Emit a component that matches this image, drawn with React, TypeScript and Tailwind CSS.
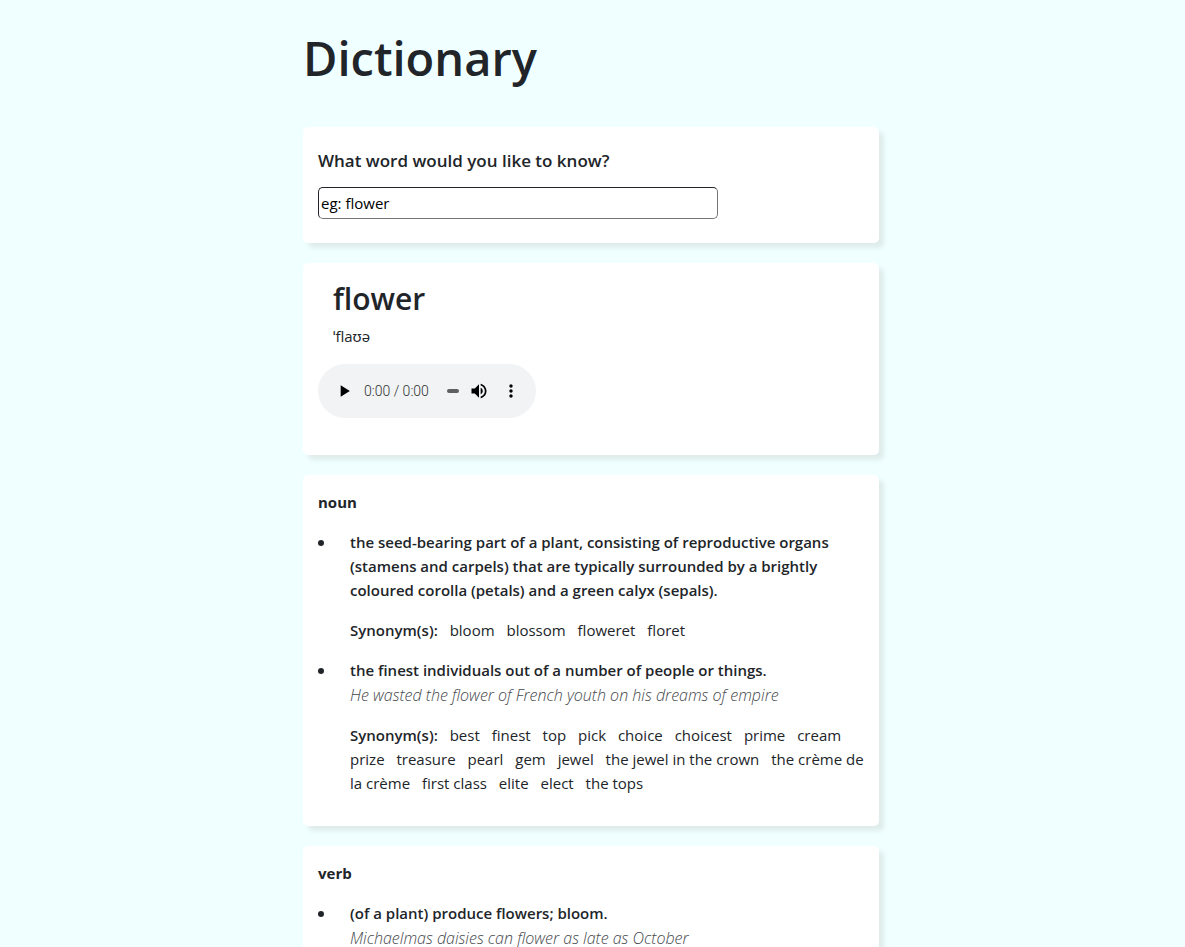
import { useState } from "react";
import type { ReactNode } from "react";

type Definition = {
  text: string;
  example?: string;
  synonyms: string[];
};

type Meaning = {
  partOfSpeech: string;
  definitions: Definition[];
};

const meanings: Meaning[] = [
  {
    partOfSpeech: "noun",
    definitions: [
      {
        text: "the seed-bearing part of a plant, consisting of reproductive organs (stamens and carpels) that are typically surrounded by a brightly coloured corolla (petals) and a green calyx (sepals).",
        synonyms: ["bloom", "blossom", "floweret", "floret"],
      },
      {
        text: "the finest individuals out of a number of people or things.",
        example: "He wasted the flower of French youth on his dreams of empire",
        synonyms: [
          "best",
          "finest",
          "top",
          "pick",
          "choice",
          "choicest",
          "prime",
          "cream",
          "prize",
          "treasure",
          "pearl",
          "gem",
          "jewel",
          "the jewel in the crown",
          "the crème de la crème",
          "first class",
          "elite",
          "elect",
          "the tops",
        ],
      },
    ],
  },
  {
    partOfSpeech: "verb",
    definitions: [
      {
        text: "(of a plant) produce flowers; bloom.",
        example: "Michaelmas daisies can flower as late as October",
        synonyms: [],
      },
    ],
  },
];

function Card({ children }: { children: ReactNode }) {
  return (
    <section className="mb-5 rounded-[5px] bg-white px-[15px] shadow-[5px_5px_5px_#dfecec]">
      {children}
    </section>
  );
}

function AudioPlayer() {
  return (
    <div className="flex h-[54px] w-[218px] items-center rounded-full bg-[#f1f3f4] pl-[14px] text-black">
      <button type="button" aria-label="Play" className="flex size-6 items-center justify-center">
        <svg viewBox="0 0 24 24" className="size-5" fill="currentColor">
          <path d="M8 5v14l11-7z" />
        </svg>
      </button>
      <span className="ml-2 w-[72px] font-[Roboto] text-[14px] leading-5 font-light text-[#303132]">0:00 / 0:00</span>
      <span className="ml-[11px] h-1 w-3 rounded-full bg-[#5f6061]" />
      <button type="button" aria-label="Mute" className="ml-2 flex size-6 items-center justify-center">
        <svg viewBox="0 0 24 24" className="size-5" fill="currentColor">
          <path d="M3 9v6h4l5 5V4L7 9H3zm13.500 3c0-1.770-1.020-3.290-2.500-4.030v8.050c1.480-.73 2.500-2.250 2.500-4.020zM14 3.230v2.060c2.890.86 5 3.540 5 6.710s-2.110 5.850-5 6.710v2.060c4.010-.91 7-4.490 7-8.770s-2.990-7.860-7-8.770z" />
        </svg>
      </button>
      <button type="button" aria-label="More options" className="ml-2 flex size-6 items-center justify-center">
        <svg viewBox="0 0 24 24" className="size-5" fill="currentColor">
          <path d="M12 8c1.100 0 2-.9 2-2s-.9-2-2-2-2 .9-2 2 .9 2 2 2zm0 2c-1.100 0-2 .9-2 2s.9 2 2 2 2-.9 2-2-.9-2-2-2zm0 6c-1.100 0-2 .9-2 2s.9 2 2 2 2-.9 2-2-.9-2-2-2z" />
        </svg>
      </button>
    </div>
  );
}

function MeaningCard({ meaning }: { meaning: Meaning }) {
  return (
    <Card>
      <div className="py-[15px]">
        <h3 className="mb-4 font-bold">{meaning.partOfSpeech}</h3>
        <ul>
          {meaning.definitions.map((definition) => (
            <li key={definition.text} className="flex gap-[26px]">
              <span className="mt-[10px] size-1.5 shrink-0 rounded-full bg-[#212529]" />
              <div className="min-w-0 flex-1">
                <div className="mb-4">
                  <p className="font-semibold">{definition.text}</p>
                  {definition.example && (
                    <p className="pt-px text-[16px] font-light text-[#44484b] italic">{definition.example}</p>
                  )}
                </div>
                {definition.synonyms.length > 0 && (
                  <p className="mb-4">
                    <span className="mr-2 font-semibold">Synonym(s):</span>{" "}
                    {definition.synonyms.map((synonym) => (
                      <span key={synonym}>
                        <span className="mr-2">{synonym}</span>{" "}
                      </span>
                    ))}
                  </p>
                )}
              </div>
            </li>
          ))}
        </ul>
      </div>
    </Card>
  );
}

export default function App() {
  const [word, setWord] = useState("");

  return (
    <div className="min-h-screen bg-[#f0ffff] pr-[3px] font-['Open_Sans','Noto_Sans',sans-serif] text-[15px] leading-6 text-[#212529]">
      <main className="mx-auto max-w-[576px] pt-[27px]">
        <h1 className="mb-[37px] text-[47px] leading-[63px] font-semibold">Dictionary</h1>
        <Card>
          <form className="pt-[22px] pb-6" onSubmit={(event) => event.preventDefault()}>
            <label htmlFor="word" className="mb-[14px] block text-[17px] font-semibold">
              What word would you like to know?
            </label>
            <input
              id="word"
              type="search"
              placeholder="eg: flower"
              value={word}
              onChange={(event) => setWord(event.target.value)}
              className="block h-8 w-full max-w-[400px] rounded-[5px] border border-t-[#212529] border-r-[#767676] border-b-[#767676] border-l-[#212529] bg-white px-[2px] text-black placeholder:text-black"
            />
          </form>
        </Card>
        <Card>
          <div className="pt-4 pb-[37px]">
            <div className="mb-4 px-[15px]">
              <h2 className="mb-[5px] text-[30px] leading-[40px] font-semibold">flower</h2>
              <p>ˈflaʊə</p>
            </div>
            <AudioPlayer />
          </div>
        </Card>
        {meanings.map((meaning) => (
          <MeaningCard key={meaning.partOfSpeech} meaning={meaning} />
        ))}
      </main>
    </div>
  );
}
